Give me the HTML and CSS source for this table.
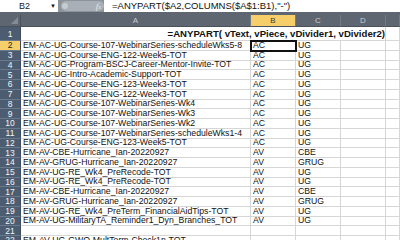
FILE: index.html
```html
<!DOCTYPE html>
<html>
<head>
<meta charset="utf-8">
<link rel="stylesheet" href="styles.css">
</head>
<body>
<div class="app">
  <div class="fbar">
    <div class="namebox"><span class="name">B2</span><span class="drop">&#9660;</span></div>
    <div class="fxzone"><div class="pill"><span class="dot"></span><span class="fx">f<sub>x</sub></span></div></div>
    <div class="formula">=ANYPART($A2,COLUMNS($A$1:B1),"-")</div>
  </div>
  <div class="sheet">
    <div class="corner"><span class="tri"></span></div>
    <div class="ch">A</div>
    <div class="ch sel">B</div>
    <div class="ch">C</div>
    <div class="ch">D</div>
    <div class="ch"></div>

    <div class="rh tall">1</div>
    <div class="c tall title">=ANYPART( vText, vPiece, vDivider1, vDivider2)</div>
    <div class="c tall"></div>

    <div class="rh sel">2</div><div class="c">EM-AC-UG-Course-107-WebinarSeries-scheduleWks5-8</div><div class="c active">AC</div><div class="c">UG</div><div class="c"></div><div class="c"></div>
    <div class="rh">3</div><div class="c">EM-AC-UG-Course-ENG-122-Week5-TOT</div><div class="c">AC</div><div class="c">UG</div><div class="c"></div><div class="c"></div>
    <div class="rh">4</div><div class="c">EM-AC-UG-Program-BSCJ-Career-Mentor-Invite-TOT</div><div class="c">AC</div><div class="c">UG</div><div class="c"></div><div class="c"></div>
    <div class="rh">5</div><div class="c">EM-AC-UG-Intro-Academic-Support-TOT</div><div class="c">AC</div><div class="c">UG</div><div class="c"></div><div class="c"></div>
    <div class="rh">6</div><div class="c">EM-AC-UG-Course-ENG-123-Week3-TOT</div><div class="c">AC</div><div class="c">UG</div><div class="c"></div><div class="c"></div>
    <div class="rh">7</div><div class="c">EM-AC-UG-Course-ENG-122-Week3-TOT</div><div class="c">AC</div><div class="c">UG</div><div class="c"></div><div class="c"></div>
    <div class="rh">8</div><div class="c">EM-AC-UG-Course-107-WebinarSeries-Wk4</div><div class="c">AC</div><div class="c">UG</div><div class="c"></div><div class="c"></div>
    <div class="rh">9</div><div class="c">EM-AC-UG-Course-107-WebinarSeries-Wk3</div><div class="c">AC</div><div class="c">UG</div><div class="c"></div><div class="c"></div>
    <div class="rh">10</div><div class="c">EM-AC-UG-Course-107-WebinarSeries-Wk2</div><div class="c">AC</div><div class="c">UG</div><div class="c"></div><div class="c"></div>
    <div class="rh">11</div><div class="c">EM-AC-UG-Course-107-WebinarSeries-scheduleWks1-4</div><div class="c">AC</div><div class="c">UG</div><div class="c"></div><div class="c"></div>
    <div class="rh">12</div><div class="c">EM-AC-UG-Course-ENG-123-Week5-TOT</div><div class="c">AC</div><div class="c">UG</div><div class="c"></div><div class="c"></div>
    <div class="rh">13</div><div class="c">EM-AV-CBE-Hurricane_Ian-20220927</div><div class="c">AV</div><div class="c">CBE</div><div class="c"></div><div class="c"></div>
    <div class="rh">14</div><div class="c">EM-AV-GRUG-Hurricane_Ian-20220927</div><div class="c">AV</div><div class="c">GRUG</div><div class="c"></div><div class="c"></div>
    <div class="rh">15</div><div class="c">EM-AV-UG-RE_Wk4_PreRecode-TOT</div><div class="c">AV</div><div class="c">UG</div><div class="c"></div><div class="c"></div>
    <div class="rh">16</div><div class="c">EM-AV-UG-RE_Wk4_PreRecode-TOT</div><div class="c">AV</div><div class="c">UG</div><div class="c"></div><div class="c"></div>
    <div class="rh">17</div><div class="c">EM-AV-CBE-Hurricane_Ian-20220927</div><div class="c">AV</div><div class="c">CBE</div><div class="c"></div><div class="c"></div>
    <div class="rh">18</div><div class="c">EM-AV-GRUG-Hurricane_Ian-20220927</div><div class="c">AV</div><div class="c">GRUG</div><div class="c"></div><div class="c"></div>
    <div class="rh">19</div><div class="c">EM-AV-UG-RE_Wk4_PreTerm_FinancialAidTips-TOT</div><div class="c">AV</div><div class="c">UG</div><div class="c"></div><div class="c"></div>
    <div class="rh">20</div><div class="c">EM-AV-UG-MilitaryTA_Reminder1_Dyn_Branches_TOT</div><div class="c">AV</div><div class="c">UG</div><div class="c"></div><div class="c"></div>
    <div class="rh">21</div><div class="c"></div><div class="c"></div><div class="c"></div><div class="c"></div><div class="c"></div>
    <div class="rh">22</div><div class="c">EM-AV-UG-GWO-MultTerm-Check1n-TOT</div><div class="c"></div><div class="c"></div><div class="c"></div><div class="c"></div>
  </div>
</div>
</body>
</html>
```

FILE: styles.css
```css
html, body {
  margin: 0;
  padding: 0;
  background: #ffffff;
  overflow: hidden;
}
.app {
  width: 400px;
  height: 240px;
  overflow: hidden;
  font-family: "Liberation Sans", Arial, sans-serif;
  background: #ffffff;
}
.fbar {
  display: flex;
  height: 12px;
  background: #9aa1a9;
  border-bottom: 3px solid #5e6671;
}
.namebox {
  width: 58px;
  background: #ffffff;
  display: flex;
  align-items: center;
  font-size: 9px;
  color: #222;
  box-sizing: border-box;
  padding-left: 19px;
}
.name { width: 31px; }
.drop { font-size: 6px; color: #111; }
.fxzone {
  width: 46px;
  display: flex;
  align-items: center;
  padding-left: 3px;
  box-sizing: border-box;
  background: #8c939b;
}
.pill {
  flex: 1;
  height: 10px;
  border-radius: 5px;
  background: #a9afb6;
  display: flex;
  align-items: center;
  justify-content: space-between;
  padding: 0 3px 0 1px;
}
.dot {
  width: 6px;
  height: 6px;
  border-radius: 50%;
  background: #c6cbd0;
}
.fx {
  font-family: "Liberation Serif", serif;
  font-style: italic;
  font-size: 9px;
  color: #e8e8e8;
  line-height: 10px;
}
.fx sub { font-size: 6px; vertical-align: 0; }
.formula {
  flex: 1;
  background: #ffffff;
  font-size: 9.5px;
  line-height: 12px;
  color: #111;
  padding-left: 8px;
  white-space: nowrap;
}
.sheet {
  display: grid;
  grid-template-columns: 21px 230px 45px 45px 45px 1fr;
  grid-template-rows: 12px 14px repeat(21, 9.75px);
  background: #ffffff;
}
.corner {
  background: #5e6671;
  border-right: 1px solid #4a515a;
  border-bottom: 1px solid #4a515a;
  position: relative;
}
.tri {
  position: absolute;
  right: 2px;
  bottom: 2px;
  width: 0;
  height: 0;
  border-left: 7px solid transparent;
  border-bottom: 7px solid #838b95;
}
.ch {
  background: #5e6671;
  color: #c9cdd2;
  font-size: 8px;
  display: flex;
  align-items: center;
  justify-content: center;
  border-right: 1px solid #737b86;
  border-bottom: 1px solid #4a515a;
}
.ch.sel {
  background: #f6cf6a;
  color: #3a3a3a;
}
.rh {
  background: #4c5d71;
  color: #f2f4f6;
  font-size: 8.5px;
  display: flex;
  align-items: center;
  justify-content: center;
  border-right: 1px solid #3e4c5c;
  border-bottom: 1px solid #6a7a8c;
  box-sizing: border-box;
}
.rh.sel {
  background: #f6cf6a;
  color: #222;
}
.c {
  border-right: 1px solid #d6d6d6;
  border-bottom: 1px solid #d6d6d6;
  font-size: 8.7px;
  line-height: 9px;
  color: #111;
  white-space: nowrap;
  overflow: visible;
  padding-left: 2px;
  display: flex;
  align-items: flex-end;
  box-sizing: border-box;
  position: relative;
  z-index: 1;
}
.c.title {
  grid-column: 2 / 6;
  justify-content: flex-end;
  font-weight: bold;
  font-size: 9.6px;
  padding-bottom: 2px;
  padding-right: 0;
}
.c.active {
  outline: 2px solid #111;
  outline-offset: -1px;
  z-index: 3;
}
```
